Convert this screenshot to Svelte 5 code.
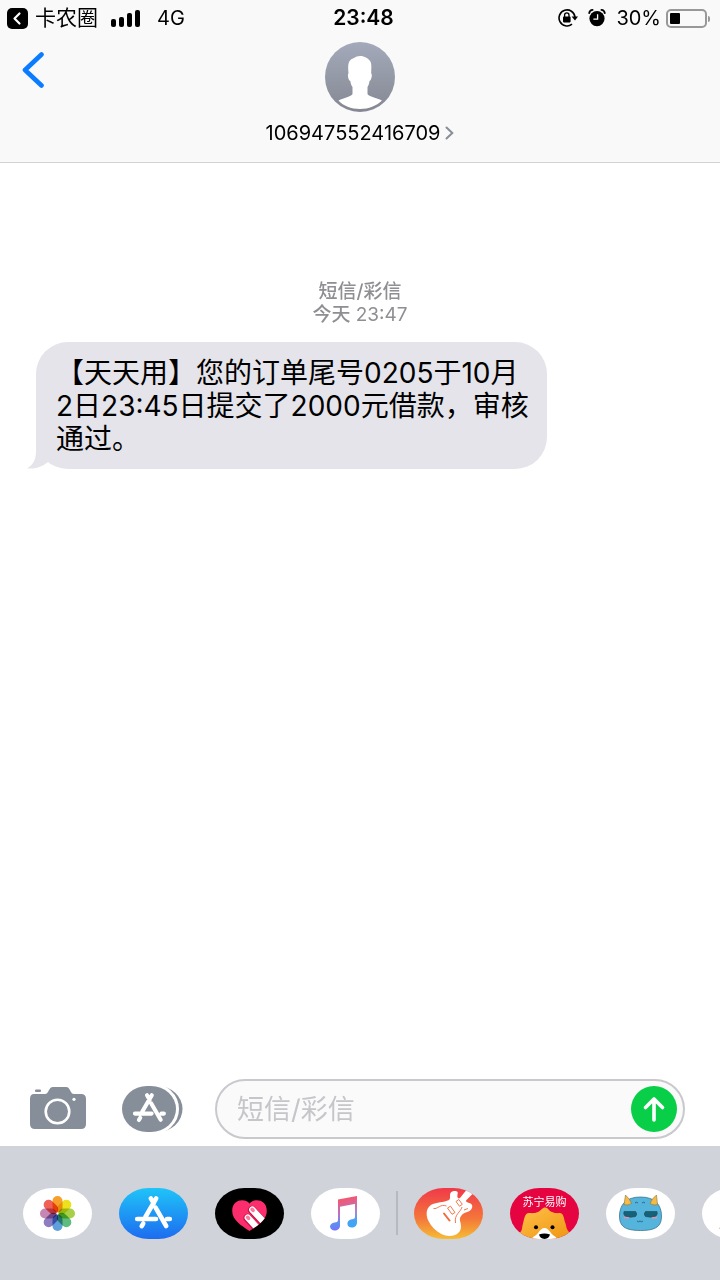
<script>
    const contact = '106947552416709';
    const battery = 30;
    const bars = [8, 10, 14, 17];
    const petals = ['#f6a02b', '#ede01c', '#a8cf48', '#5fbb7f', '#5f9fdc', '#8c7cc0', '#c787b4', '#ef6157'];

    let draft = $state('');
</script>

{#snippet storeGlyph()}
    <g fill="none" stroke="#fff" stroke-width="4.6" stroke-linecap="round">
        <path d="M37.2 10.4 26.4 29M24.2 35.6l-1.5 2.6M31.8 10.4l3 5M36.6 19.6 47.2 38M18.2 31H37M48 31h2.8" />
    </g>
{/snippet}

<div class="screen">
    <header class="header">
        <div class="status">
            <div class="status__side">
                <svg width="21" height="21" viewBox="0 0 21 21" aria-hidden="true">
                    <rect width="21" height="21" rx="5" />
                    <path d="M12.5 5.5 7.5 10.5l5 5" fill="none" stroke="#fff" stroke-width="2.2" stroke-linecap="round" stroke-linejoin="round" />
                </svg>
                <span class="status__return">卡农圈</span>
                <span class="signal">
                    {#each bars as height}
                        <i style:height="{height}px"></i>
                    {/each}
                </span>
                <span>4G</span>
            </div>
            <time class="status__time">23:48</time>
            <div class="status__side status__side--right">
                <svg width="20" height="18" viewBox="0 0 20 18" aria-hidden="true">
                    <path d="M14 15.2A8 8 0 1 1 17 8" fill="none" stroke="#000" stroke-width="1.6" />
                    <path d="M13.6 7.4h6.4l-3 4z" />
                    <rect x="5" y="7.6" width="7.6" height="5.8" rx=".8" />
                    <path d="M6.6 8V6a2.2 2.2 0 0 1 4.4 0v2" fill="none" stroke="#000" stroke-width="1.3" />
                </svg>
                <svg class="alarm" width="18" height="18" viewBox="0 0 18 18" aria-hidden="true">
                    <circle cx="9" cy="9.6" r="7.6" />
                    <path d="M1.2 4.2C1.4 2.4 2.8 1 4.6.9M16.8 4.2C16.6 2.4 15.2 1 13.4.9" fill="none" stroke="#000" stroke-width="1.8" stroke-linecap="round" />
                    <path d="M9.6 5.2v4.9H5.4" fill="none" stroke="#fff" stroke-width="1.3" />
                </svg>
                <span>{battery}%</span>
                <span class="battery">
                    <i style:width="{battery}%"></i>
                </span>
            </div>
        </div>
        <div class="contact">
            <button class="back" type="button" aria-label="返回">
                <svg width="22" height="38" viewBox="0 0 22 38">
                    <path d="M19.5 3.5 3 19l16.500 15.500" fill="none" stroke="#0b7bff" stroke-width="4.6" stroke-linecap="round" stroke-linejoin="round" />
                </svg>
            </button>
            <a class="person" href="#contact">
                <svg width="70" height="70" viewBox="0 0 70 70" aria-hidden="true">
                    <defs>
                        <linearGradient id="avatar" x2="0" y2="1">
                            <stop stop-color="#a4aabb" />
                            <stop offset="1" stop-color="#858893" />
                        </linearGradient>
                    </defs>
                    <circle cx="35" cy="35" r="35" fill="url(#avatar)" />
                    <path d="M35 14c3-.3 9.500 2 11 7 .7 3 .2 6 .2 10.500 1.300.4.500 6.500-1.700 7.500-.4 3-1 4-2 6v7c1.500 3 9 3.500 14.500 6.500C51 64 44 67 35 67s-16.500-3-21.500-8.500C19 55.500 26 55 27.500 52v-7c-1.200-2-1.700-3-2.200-6-2.300-1-3-7-1.800-7.500-.3-4.500-.7-7.500.2-10.500 1-3.500 3.300-4 5.300-5 1.500-1.300 4-2 6-2z" fill="#fff" />
                </svg>
                <span class="person__name">
                    {contact}
                    <svg width="9" height="14" viewBox="0 0 9 14" aria-hidden="true">
                        <path d="m1.500 1.500 5.800 5.500-5.800 5.500" fill="none" stroke="#868e99" stroke-width="2" stroke-linecap="round" />
                    </svg>
                </span>
            </a>
        </div>
    </header>

    <main class="thread">
        <p class="stamp"><strong>短信/彩信</strong><span><strong>今天</strong> 23:47</span></p>
        <p class="bubble">
            【天天用】您的订单尾号0205于10月2日23:45日提交了2000元借款，审核通过。
            <svg class="bubble__tail" width="26" height="32" viewBox="0 0 26 32" aria-hidden="true">
                <path d="M9 0v14c0 9-3 14-9 17.500 8 .5 15-1.500 21-6.500L26 0z" fill="#e5e4ea" />
            </svg>
        </p>
    </main>

    <form class="composer" onsubmit={(e) => e.preventDefault()}>
        <button type="button" aria-label="相机">
            <svg width="61" height="46" viewBox="0 0 61 46">
                <path d="M5 8h11c4 0 3.500-7 8-7h13c4.500 0 4 7 8 7h7q5 0 5 5v25q0 5-5 5H6q-5 0-5-5V13q0-5 4-5z" fill="#868e99" />
                <rect x="6" y="3.500" width="6" height="2.500" rx="1" fill="#868e99" />
                <circle cx="28.500" cy="25.500" r="11.800" fill="none" stroke="#fff" stroke-width="2.600" />
                <circle cx="45" cy="13.300" r="1.600" fill="#fff" />
            </svg>
        </button>
        <button type="button" aria-label="应用">
            <svg width="61" height="46" viewBox="0 0 61 46">
                <rect x="6.500" width="54" height="46" rx="25" ry="23" fill="#868e99" />
                <rect width="54" height="46" rx="25" ry="23" fill="#868e99" stroke="#fff" stroke-width="6" paint-order="stroke" />
                <g transform="translate(-3.300 0) scale(.89)">{@render storeGlyph()}</g>
            </svg>
        </button>
        <div class="field">
            <input type="text" placeholder="短信/彩信" aria-label="短信/彩信" bind:value={draft} />
            <button class="send" type="submit" aria-label="发送">
                <svg width="46" height="46" viewBox="0 0 46 46">
                    <path d="M23 34V13.500M14.500 21.500 23 13l8.500 8.500" fill="none" stroke="#fff" stroke-width="3.600" stroke-linecap="round" stroke-linejoin="round" />
                </svg>
            </button>
        </div>
    </form>

    <nav class="drawer" aria-label="应用">
        <div class="drawer__group">
            <button class="app" type="button" aria-label="照片">
                <svg viewBox="0 0 69 51">
                    {#each petals as color, i}
                        <rect class="petal" x="29.500" y="8" width="10" height="16.500" rx="5" fill={color} transform="rotate({i * 45} 34.500 25.500)" />
                    {/each}
                </svg>
            </button>
            <button class="app app--store" type="button" aria-label="App Store">
                <svg viewBox="0 0 69 51">{@render storeGlyph()}</svg>
            </button>
            <button class="app app--touch" type="button" aria-label="Digital Touch">
                <svg viewBox="0 0 69 51">
                    <defs>
                        <clipPath id="heart">
                            <path d="M34.500 15.500C30 10 17.200 11 17.200 23c0 9 9 14.500 17.300 20 8.300-5.500 17.300-11 17.300-20 0-12-12.800-13-17.300-7.500z" />
                        </clipPath>
                    </defs>
                    <g clip-path="url(#heart)">
                        <path fill="#fb2d6c" d="M0 0h69v51H0z" />
                        <path d="m32.500 30 12 13M37 22l13 14" stroke="#c90f48" stroke-width="8" stroke-linecap="round" />
                        <path d="m32.800 29.700 12 13M37.300 21.700l13 14" stroke="#fff" stroke-width="6.400" stroke-linecap="round" />
                        <path d="m32.600 29.300 1 1.100M37.100 21.300l1 1.100" stroke="#fb7a9f" stroke-width="3.600" stroke-linecap="round" />
                    </g>
                </svg>
            </button>
            <button class="app" type="button" aria-label="音乐">
                <svg viewBox="0 0 69 51">
                    <defs>
                        <linearGradient id="tune" x1=".4" y1="0" x2=".6" y2="1">
                            <stop offset=".1" stop-color="#f5566f" />
                            <stop offset=".5" stop-color="#b573c8" />
                            <stop offset=".75" stop-color="#5b8ff5" />
                            <stop offset="1" stop-color="#8b62f5" />
                        </linearGradient>
                        <linearGradient id="tuneRight" x2="0" y2="1">
                            <stop stop-color="#f5566f" />
                            <stop offset=".5" stop-color="#a985d6" />
                            <stop offset=".8" stop-color="#41a4f5" />
                        </linearGradient>
                    </defs>
                    <path d="M27 11.500 46 8v7.500l-17 3.200v19c0 3-2.500 4.800-5.300 4.800-2.600 0-4.700-1.500-4.700-3.900 0-2.300 1.800-3.700 4.500-4.200 2.700-.5 3.500-.8 3.500-2.500z" fill="url(#tune)" />
                    <path d="M44 9.500 46 8v26.500c0 3-2.300 5-5.200 5-2.600 0-4.400-1.600-4.400-4 0-2.300 1.800-3.800 4.400-4.200 2.500-.5 3.200-.8 3.200-2.500z" fill="url(#tuneRight)" />
                </svg>
            </button>
        </div>
        <hr class="drawer__divider" />
        <div class="drawer__group">
            <button class="app app--band" type="button" aria-label="库乐队">
                <svg viewBox="0 0 69 51">
                    <path d="M33 12.700C38 12 35 8 36.500 5c1.500-2.500 6-2.500 7-1 .8 1.500-1 4 .500 6 1 1 2 0 3-1.300L54 0l6 4.500-8 8c0 2 2 2 3.500 2.500 3 1 3.500 3.500 2 6-2 3.500-6.500 2.500-9.500 5.700-2 2.300-2.800 4-1.700 7.300 2 6.500-.3 11-5.300 13-5 1.800-11 .7-14.500-1.500C21 42.500 17 38 14.500 33c-2.800-5.500-2.500-12 1.500-15.300 4.500-3.700 11-2.700 17-5z" fill="#fff" />
                    <g fill="none" stroke="#f2693c" stroke-width=".9">
                        <path d="m33.500 20 3-1.800 4.500 6.300-3 1.800zM42 13.500l2.800-2 3.500 4.800-2.800 2zM19.500 20.500c4 1 7-5 13-2.500M48 19c-1 5-8 7-6.500 16M54 20.500l-4 1.500" />
                        <path d="m30 25.500 5.500 7" stroke-width="2" stroke-linecap="round" />
                    </g>
                </svg>
            </button>
            <button class="app app--suning" type="button" aria-label="苏宁易购">
                <svg viewBox="0 0 69 51">
                    <defs>
                        <linearGradient id="mane" x2="1" y2="1">
                            <stop stop-color="#ffc24a" />
                            <stop offset="1" stop-color="#ef9411" />
                        </linearGradient>
                    </defs>
                    <text x="34.500" y="18" text-anchor="middle" fill="#fff">苏宁易购</text>
                    <path d="M7 51c1-4 3-6 4.500-8.500 1-3 .5-4 1.500-7 1-3.500 1.500-8.500 4-10 3-1 7 .5 11-1.500 3.500-2 4.500-4.500 7-4.500 3 0 3.500 3 7 4.500 4 2 7 .5 9.500 1.500 2.500 1.500 2.500 6.500 4 10 1 3 .5 4 2 6.500 2 3 4 5 4.500 9z" fill="url(#mane)" />
                    <path d="M22 51c1-3 4-3 6-6 2-3 4-5 6.500-5s4.500 2 6.500 5c2 3 5 3 6 6z" fill="#fff" />
                    <path d="M29 46.500q5.500-2 11 0-1 4-5.500 4.500-4.500-.5-5.500-4.500z" />
                    <circle cx="26" cy="39.300" r="2" />
                    <circle cx="42.500" cy="39.300" r="2" />
                </svg>
            </button>
            <button class="app" type="button" aria-label="表情">
                <svg viewBox="0 0 69 51">
                    <path d="M34.500 9C49 9 55.500 17 55.500 28c0 10-5 14.500-21 14.500S13.500 38 13.500 28c0-11 6.500-19 21-19z" fill="#55b4dc" stroke="#3b7589" stroke-width=".8" />
                    <path d="M18 16.500 19.500 7q4.500 4 6 8.500-4 2.500-7.500 1zM51.500 16.500 50.500 7q-5 4-6.500 8.500 4 2.500 7.500 1z" fill="#f5bc45" stroke="#8a7445" stroke-width=".6" />
                    <path d="M18 23.500h11.500q2.500 2.500 0 5-6 1.500-10.500-.5-2-2-1-4.500zM51 23.500H39.500q-2.500 2.500 0 5 6 1.500 10.500-.5 2-2 1-4.500z" fill="#14617a" stroke="#2a4e5c" stroke-width=".7" />
                    <path d="m29 15 1.500-.8L32 15M36 15l1.500-.8L39 15M31 33q1.500 1.600 3 0 1.500 1.600 3 0" fill="none" stroke="#286078" stroke-width=".9" />
                    <path d="M18.500 29.800h4M46.500 29.800h4" stroke="#e48fa7" stroke-width="1.600" stroke-linecap="round" />
                </svg>
            </button>
            <button class="app" type="button" aria-label="更多">
                <svg viewBox="0 0 69 51">
                    <path d="M17.500 41 19 34l4-3v10z" fill="#e4574f" />
                </svg>
            </button>
        </div>
    </nav>
</div>

<style>
    :global(body) {
        margin: 0;
    }
    .screen {
        display: flex;
        flex-direction: column;
        min-height: 100vh;
        overflow: hidden;
        font-family: Inter, 'Noto Sans CJK SC', sans-serif;
        color: #000;
        background: #fff;
    }
    button {
        display: block;
        flex: none;
        padding: 0;
        border: 0;
        background: none;
        cursor: pointer;
    }
    svg {
        display: block;
        flex: none;
    }

    /** Header */
    .header {
        background: #f9f9f9;
        border-bottom: 1px solid #d3d3d6;
    }
    .status {
        display: grid;
        grid-template-columns: 1fr auto 1fr;
        align-items: center;
        height: 36px;
        padding-left: 7px;
        font-size: 20px;
        line-height: 24px;
    }
    .status__side {
        display: flex;
        align-items: center;
    }
    .status__side--right {
        justify-content: flex-end;
        padding-right: 9px;
    }
    .status__return {
        margin-left: 7px;
        font-size: 21px;
    }
    .status__time {
        font-size: 21px;
        font-weight: 600;
    }
    .signal {
        display: flex;
        align-items: flex-end;
        gap: 3px;
        margin: 0 17px 0 13px;
    }
    .signal i {
        width: 5px;
        border-radius: 2px;
        background: #000;
    }
    .alarm {
        margin: 0 10px;
    }
    .battery {
        position: relative;
        box-sizing: border-box;
        width: 41px;
        height: 19px;
        margin: 0 4px 0 5px;
        padding: 2px;
        border: 2px solid #98989a;
        border-radius: 5px;
    }
    .battery i {
        display: block;
        height: 100%;
        border-radius: 1px;
        background: #000;
    }
    .battery::after {
        content: '';
        position: absolute;
        top: 5px;
        right: -5px;
        width: 2px;
        height: 6px;
        border-radius: 0 2px 2px 0;
        background: #98989a;
    }
    .contact {
        display: grid;
        grid-template-columns: 1fr auto 1fr;
        align-items: start;
        padding: 6px 22px 17px;
    }
    .back {
        justify-self: start;
        margin-top: 9px;
    }
    .person {
        display: flex;
        flex-direction: column;
        align-items: center;
        gap: 9px;
        color: inherit;
        text-decoration: none;
    }
    .person__name {
        display: flex;
        align-items: center;
        gap: 5px;
        font-size: 20px;
        line-height: 24px;
    }

    /** Conversation */
    .thread {
        flex: 1;
        padding: 117px 36px 24px;
    }
    .stamp {
        display: flex;
        flex-direction: column;
        align-items: center;
        margin: 0 0 16px;
        font-size: 19px;
        line-height: 23px;
        color: #8e8e93;
    }
    .stamp strong {
        font-weight: 500;
    }
    .bubble {
        position: relative;
        box-sizing: border-box;
        width: fit-content;
        max-width: 511px;
        margin: 0;
        padding: 15px 16px 13px 20px;
        border-radius: 32px;
        font-size: 28px;
        line-height: 33px;
        background: #e5e4ea;
    }
    .bubble__tail {
        position: absolute;
        bottom: 0;
        left: -9px;
    }

    /** Message field */
    .composer {
        display: flex;
        align-items: center;
        gap: 32px;
        padding: 0 35px 7px 29px;
    }
    .field {
        display: flex;
        flex: 1;
        align-items: center;
        box-sizing: border-box;
        min-width: 0;
        height: 60px;
        padding: 0 6px 0 20px;
        border: 2px solid #c8c8cd;
        border-radius: 30px;
        background: #fafafa;
    }
    .field input {
        flex: 1;
        min-width: 0;
        padding: 0;
        border: 0;
        outline: 0;
        font: inherit;
        font-size: 27px;
        background: none;
    }
    .field input::placeholder {
        color: #c5c5ca;
        opacity: 1;
    }
    .send {
        border-radius: 50%;
        background: #08cf47;
    }

    /** App drawer */
    .drawer {
        display: flex;
        align-items: flex-start;
        box-sizing: border-box;
        height: 134px;
        padding: 42px 0 0 23px;
        background: #d0d3da;
    }
    .drawer__group {
        display: flex;
        gap: 27px;
    }
    .drawer__divider {
        flex: none;
        width: 2px;
        height: 44px;
        margin: 3px 16px 0;
        border: 0;
        background: #b6b9c0;
    }
    .app {
        width: 69px;
        height: 51px;
        border-radius: 30px / 26px;
        overflow: hidden;
        background: #fff;
    }
    .app text {
        font-family: 'Noto Sans CJK SC', sans-serif;
        font-size: 11px;
    }
    .app--store {
        background: linear-gradient(#1fc4f8, #1d6cf0);
    }
    .app--touch {
        background: #000;
    }
    .app--band {
        background: linear-gradient(#f0394a, #f4773a 60%, #f5bd35);
    }
    .app--suning {
        background: #e5043f;
    }
    .petal {
        mix-blend-mode: multiply;
    }
</style>
